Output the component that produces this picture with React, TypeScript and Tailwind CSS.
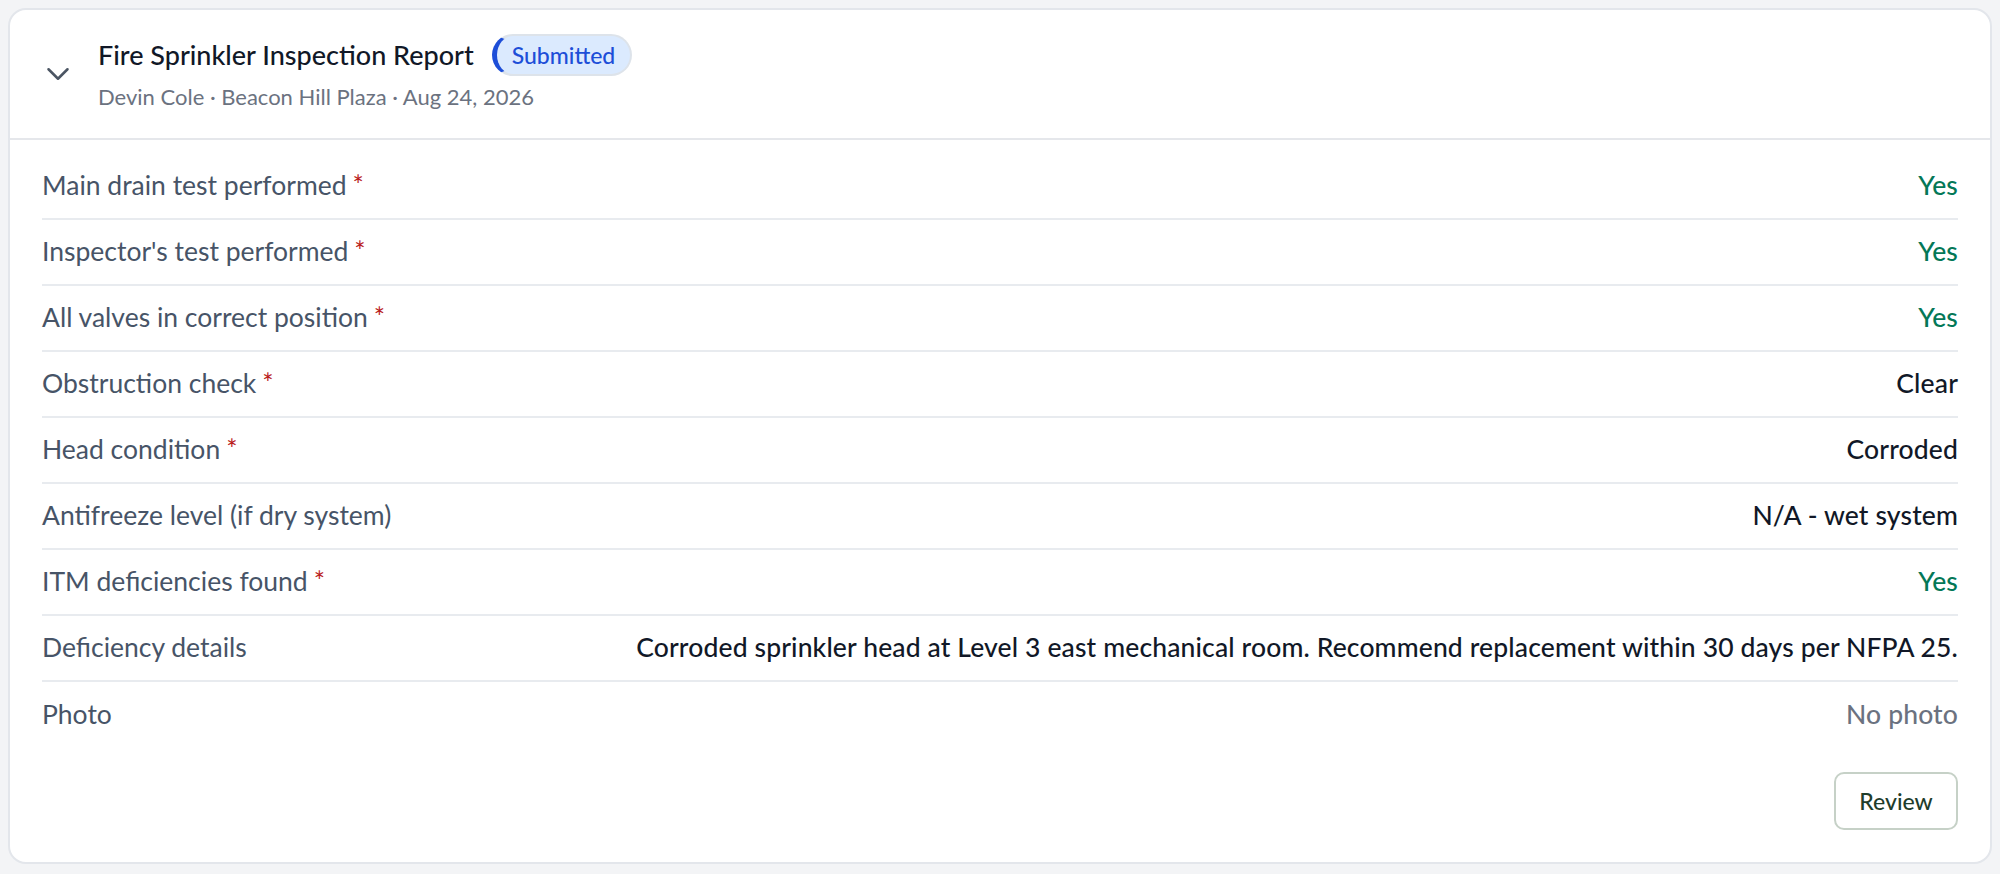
import { ChevronDown } from 'lucide-react'

interface Field {
  label: string
  value: string
  required?: boolean
  tone?: 'yes' | 'plain' | 'muted'
}

const fields: Field[] = [
  { label: 'Main drain test performed', value: 'Yes', required: true, tone: 'yes' },
  { label: "Inspector's test performed", value: 'Yes', required: true, tone: 'yes' },
  { label: 'All valves in correct position', value: 'Yes', required: true, tone: 'yes' },
  { label: 'Obstruction check', value: 'Clear', required: true },
  { label: 'Head condition', value: 'Corroded', required: true },
  { label: 'Antifreeze level (if dry system)', value: 'N/A - wet system' },
  { label: 'ITM deficiencies found', value: 'Yes', required: true, tone: 'yes' },
  {
    label: 'Deficiency details',
    value:
      'Corroded sprinkler head at Level 3 east mechanical room. Recommend replacement within 30 days per NFPA 25.',
  },
  { label: 'Photo', value: 'No photo', tone: 'muted' },
]

function valueClass(tone?: Field['tone']) {
  if (tone === 'yes') return 'text-[#047857]'
  if (tone === 'muted') return 'text-[#6b7280]'
  return 'text-[#111827]'
}

export default function App() {
  return (
    <div className="min-h-screen bg-[#f3f4f6] p-2 font-['Lato','Liberation_Sans',sans-serif]">
      <div className="rounded-[18px] border-2 border-[#e3e6eb] bg-white">
        {/* header */}
        <div className="flex h-[130px] items-center gap-5 border-b-2 border-[#e5e7eb] pl-[28px]">
          <button className="flex h-10 w-10 items-center justify-center text-[#4b5563]">
            <ChevronDown size={38} strokeWidth={1.6} />
          </button>
          <div className="flex flex-col gap-[6px] pb-[2px]">
            <div className="flex items-center gap-[18px]">
              <h2 className="text-[27px] font-medium leading-[40px] text-[#111827]">
                Fire Sprinkler Inspection Report
              </h2>
              <span className="flex h-[42px] items-center rounded-full border-2 border-l-[5px] border-[#dde3ea] border-l-[#1d4ed8] bg-[#dbeafe] px-[15px] text-[23px] font-medium text-[#1d4ed8]">
                Submitted
              </span>
            </div>
            <p className="text-[22px] leading-[30px] text-[#6b7280]">
              Devin Cole · Beacon Hill Plaza · Aug 24, 2026
            </p>
          </div>
        </div>

        {/* fields */}
        <div className="px-8 pt-[14px] pb-8">
          {fields.map((f, i) => (
            <div
              key={f.label}
              className={`flex h-[66px] items-center justify-between gap-8 text-[26.5px] ${
                i < fields.length - 1 ? 'border-b-2 border-[#e8ebef]' : ''
              }`}
            >
              <span className="text-[#475467]">
                {f.label}
                {f.required && <span className="ml-[6px] text-[#b91c1c]">*</span>}
              </span>
              <span className={`font-medium tracking-[0.14px] ${valueClass(f.tone)}`}>{f.value}</span>
            </div>
          ))}

          <div className="mt-6 flex justify-end">
            <button className="h-[58px] w-[124px] rounded-[10px] border-2 border-[#c6d1c7] text-[23px] font-medium text-[#1f3d2b]">
              Review
            </button>
          </div>
        </div>
      </div>
    </div>
  )
}
